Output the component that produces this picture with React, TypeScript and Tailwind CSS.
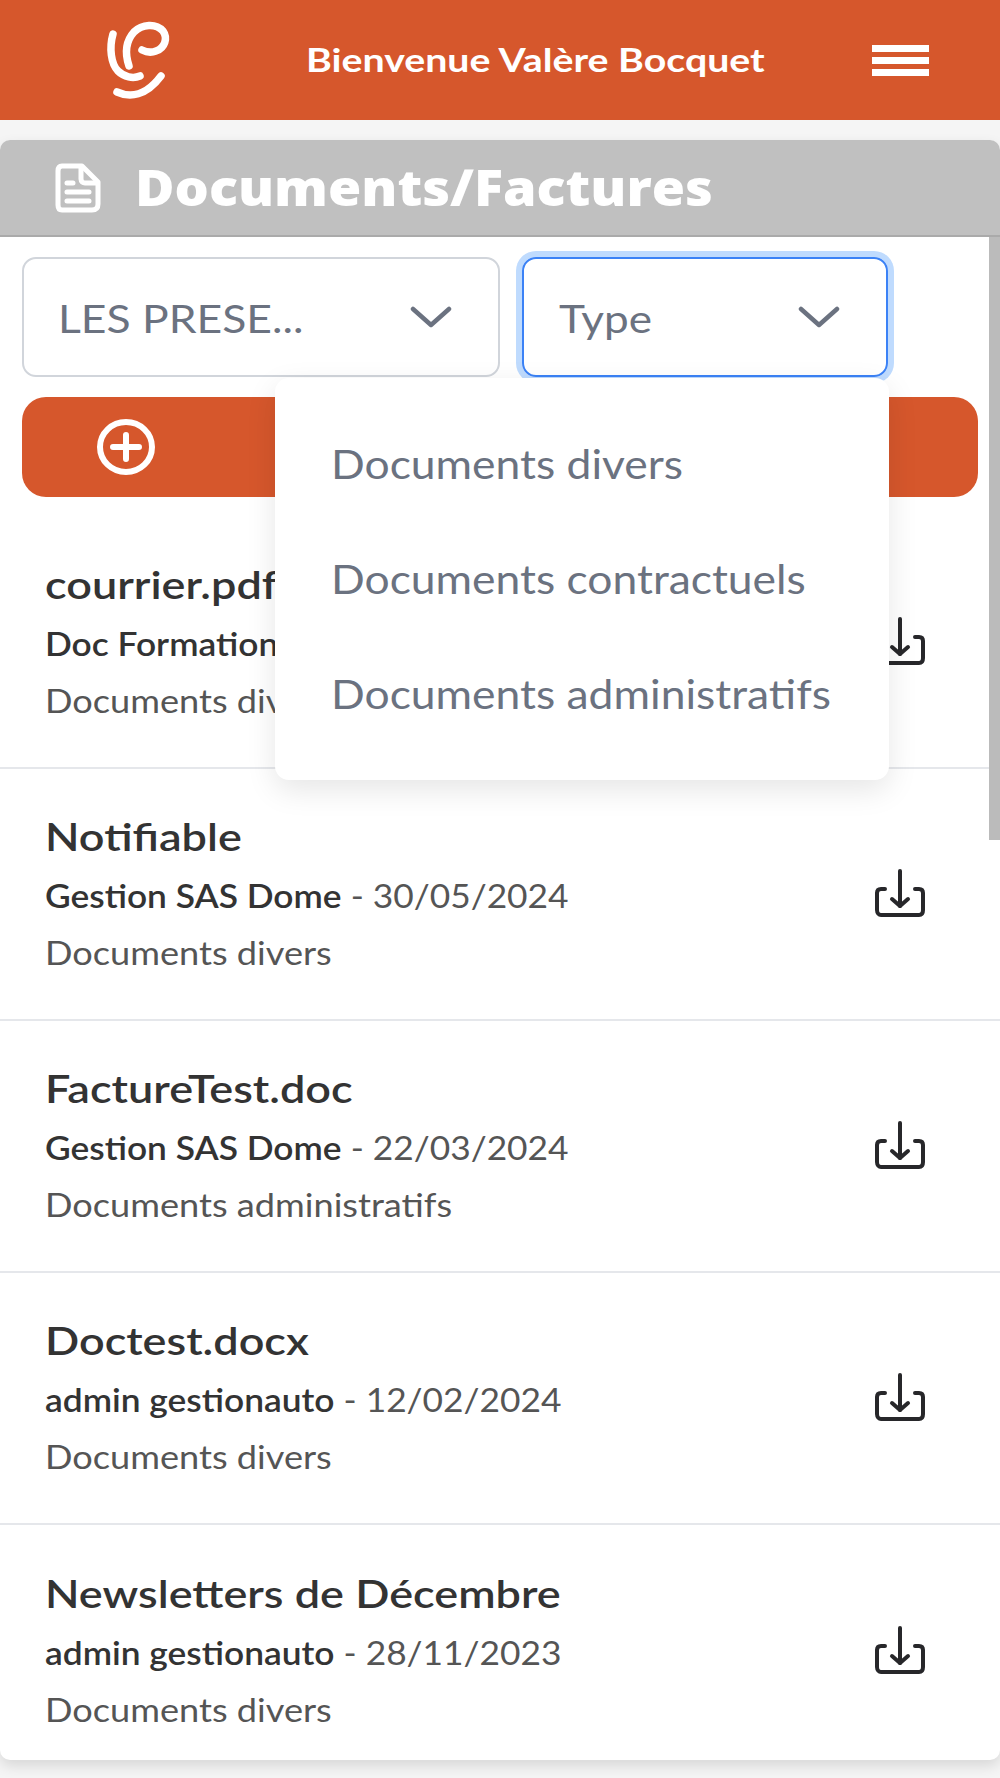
import React from 'react';

const documents = [
  { name: 'courrier.pdf', author: 'Doc Formation', date: '12/06/2024', type: 'Documents divers' },
  { name: 'Notifiable', author: 'Gestion SAS Dome', date: '30/05/2024', type: 'Documents divers' },
  { name: 'FactureTest.doc', author: 'Gestion SAS Dome', date: '22/03/2024', type: 'Documents administratifs' },
  { name: 'Doctest.docx', author: 'admin gestionauto', date: '12/02/2024', type: 'Documents divers' },
  { name: 'Newsletters de Décembre', author: 'admin gestionauto', date: '28/11/2023', type: 'Documents divers' },
];

const Logo = () => (
  <svg width="120" height="120" viewBox="0 0 120 120" fill="none" stroke="white" strokeWidth="7.5" strokeLinecap="round">
    <path d="M33 34C29 48 31 64 38 71C44 77 53 79 60 76" />
    <path d="M49 66C45 54 45 42 54 32C62 24 76 23 83 31C88 38 85 48 76 51C71 53 66 52 62 50" />
    <path d="M37 92C50 98 66 96 81 76" />
  </svg>
);

const FileIcon = () => (
  <svg width="48" height="50" viewBox="0 0 48 50" fill="none" stroke="white" strokeWidth="5" strokeLinejoin="round" strokeLinecap="round">
    <path d="M8 3H28L44 19V41C44 45 42 47 38 47H8C5 47 4 45 4 42V8C4 5 5 3 8 3Z" />
    <path d="M27 4V16C27 19 29 20 31 20H43" />
    <path d="M13 20H19M13 29H35M13 38H35" />
  </svg>
);

const Chevron = () => (
  <svg width="42" height="22" viewBox="0 0 42 22" fill="none" stroke="#6b7280" strokeWidth="4.5" strokeLinecap="round" strokeLinejoin="round">
    <path d="M3 3L21 19L39 3" />
  </svg>
);

const DownloadIcon = () => (
  <svg width="52" height="52" viewBox="0 0 52 52" fill="none" stroke="#27272a" strokeWidth="4" strokeLinecap="round" strokeLinejoin="round">
    <path d="M11 21H7C4 21 3 23 3 25V42C3 45 5 47 7 47H45C48 47 49 45 49 42V25C49 23 48 21 45 21H41" />
    <path d="M26 3V38" />
    <path d="M18 31L26 38L34 31" />
  </svg>
);

export default function App() {
  return (
    <div className="min-h-[1778px] overflow-hidden bg-[#f5f5f5] font-['Lato',sans-serif]">
      {/* Header */}
      <header className="flex h-[120px] items-center bg-[#d6572c] pl-[80px] pr-[71px]">
        <Logo />
        <div className="ml-[106px] flex-1">
          <span className="inline-block origin-left scale-x-[1.19] text-[33px] font-bold whitespace-nowrap text-white">
            Bienvenue Valère Bocquet
          </span>
        </div>
        <div className="flex w-[57px] flex-col gap-[5px]">
          <div className="h-[7px] bg-white" />
          <div className="h-[7px] bg-white" />
          <div className="h-[7px] bg-white" />
        </div>
      </header>

      <main className="relative mt-[20px] h-[1620px] rounded-[10px] bg-white shadow-[0_6px_14px_rgba(0,0,0,0.12)]">
        <div className="flex h-[97px] items-center gap-[33px] rounded-t-[10px] border-b-2 border-[#aaaaaa] bg-[#c0c0c0] pl-[54px]">
          <FileIcon />
          <h1 className="origin-left scale-x-[1.078] font-['Open_Sans',sans-serif] text-[50px] font-extrabold text-white">
            Documents/Factures
          </h1>
        </div>

        <div className="absolute top-[97px] right-0 h-[603px] w-[11px] bg-[#bbbbbb]" />

        <div className="px-[22px] pt-[20px]">
          <div className="flex gap-[22px]">
            <div className="flex h-[120px] w-[478px] items-center justify-between rounded-[14px] border-2 border-[#d1d5db] pr-[46px] pl-[34px] text-[38px] text-[#6b7280]">
              <span className="origin-left scale-x-[1.17] pt-[3px]">LES PRESE...</span>
              <Chevron />
            </div>
            <div className="flex h-[120px] w-[366px] items-center justify-between rounded-[14px] border-2 border-[#3b82f6] pr-[46px] pl-[35px] text-[38px] text-[#6b7280] ring-[6px] ring-[#bfdbfe]">
              <span className="origin-left scale-x-[1.16] pt-[3px]">Type</span>
              <Chevron />
            </div>
          </div>

          <button className="mt-[20px] flex h-[100px] w-[956px] items-center rounded-[24px] bg-[#d6572c] pl-[74px]">
            <svg width="60" height="56" viewBox="0 0 60 56" fill="none" stroke="white" strokeWidth="6" strokeLinecap="round">
              <ellipse cx="30" cy="28" rx="26" ry="25" />
              <path d="M30 16V40M17 28H43" />
            </svg>
          </button>
        </div>

        <div className="mt-[20px]">
          {documents.map((doc, i) => (
            <div
              key={doc.name}
              className={`flex h-[252px] items-center justify-between pr-[74px] pl-[45px] ${i < documents.length - 1 ? 'border-b-2 border-[#e5e7eb]' : ''}`}
            >
              <div className="flex flex-col gap-[18px]">
                <div className="origin-left scale-x-[1.185] text-[38px] leading-[40px] font-semibold whitespace-nowrap text-[#333333]">
                  {doc.name}
                </div>
                <div className="mt-[1px] origin-left scale-x-[1.07] text-[33px] leading-[40px] whitespace-nowrap text-[#555555]">
                  <span className="font-semibold text-[#333333]">{doc.author}</span> - {doc.date}
                </div>
                <div className="origin-left scale-x-[1.13] text-[32px] leading-[40px] whitespace-nowrap text-[#555555]">
                  {doc.type}
                </div>
              </div>
              <DownloadIcon />
            </div>
          ))}
        </div>

        {/* Open type dropdown */}
        <div className="absolute top-[238px] left-[275px] flex h-[402px] w-[614px] flex-col justify-center gap-[60px] rounded-[14px] bg-white pl-[56px] text-[40px] leading-[55px] text-[#6b7280] shadow-[0_10px_30px_rgba(0,0,0,0.1)]">
          <div className="origin-left scale-x-[1.11]">Documents divers</div>
          <div className="origin-left scale-x-[1.11]">Documents contractuels</div>
          <div className="origin-left scale-x-[1.11]">Documents administratifs</div>
        </div>
      </main>
    </div>
  );
}
